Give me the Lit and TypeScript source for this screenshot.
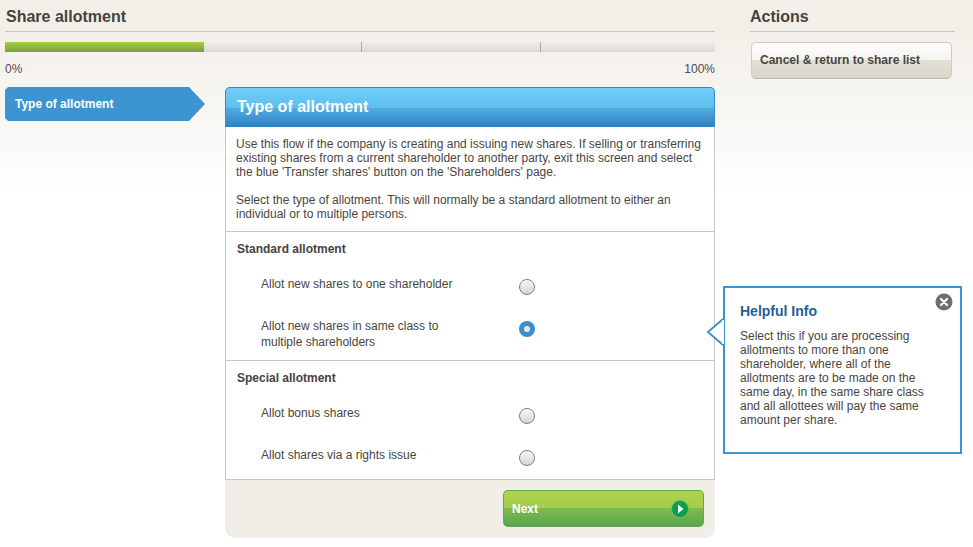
import { LitElement, html, css } from "lit";
import { customElement } from "lit/decorators.js";

@customElement("app-root")
export class AppRoot extends LitElement {
  static styles = css`
    :host {
      display: block;
      position: relative;
      width: 973px;
      height: 547px;
      overflow: hidden;
      font-family: "Liberation Sans", Arial, sans-serif;
      font-size: 12px;
      line-height: 14px;
      color: #4a4541;
      background: linear-gradient(#f2efe8 0, #f2efe8 30px, #ffffff 200px);
    }
    .page {
      display: grid;
      grid-template-columns: 710px 205px;
      column-gap: 35px;
      padding-left: 5px;
    }
    .title {
      margin: 0;
      height: 31px;
      border-bottom: 1px solid #c9c5bd;
      font-size: 16px;
      line-height: 33px;
      font-weight: bold;
      color: #47423e;
    }
    main .title { padding-left: 1px; }
    .progress {
      margin-top: 10px;
      height: 10px;
      display: grid;
      grid-template-columns: 199px 158px 179px 174px;
      background: linear-gradient(#efedea, #dcdad6);
    }
    .progress .fill {
      background: linear-gradient(#a5cf46, #7c9c3e);
    }
    .progress .seg { border-right: 1px solid #a9a7a3; }
    .progress .seg.last { border-right: 0; }
    .scale {
      display: flex;
      justify-content: space-between;
      margin-top: 10px;
      height: 14px;
      color: #4f4a58;
    }
    .flow {
      display: grid;
      grid-template-columns: 200px 490px;
      column-gap: 20px;
      margin-top: 11px;
    }
    .step {
      height: 34px;
      box-sizing: border-box;
      padding: 10px 0 0 10px;
      font-weight: bold;
      color: #fff;
      background: #3c94d1;
      clip-path: polygon(0 3px, 3px 0, 184px 0, 200px 17px, 184px 34px, 3px 34px, 0 31px);
    }
    .panel-head {
      margin: 0;
      height: 40px;
      box-sizing: border-box;
      padding-left: 11px;
      border: 1px solid #3a86c4;
      border-bottom: 0;
      border-radius: 5px 5px 0 0;
      font-size: 16px;
      line-height: 38px;
      font-weight: bold;
      color: #fff;
      background: linear-gradient(#6fcdf8 0, #5fbfee 50%, #52aee2 50%, #2f81c3 100%);
    }
    .panel-body {
      background: #fff;
      border: 1px solid #c8c8c8;
      border-top: 0;
    }
    .intro {
      padding: 10px;
      height: 104px;
      box-sizing: border-box;
    }
    .intro p { margin: 0 0 14px; }
    .section { border-top: 1px solid #c8c8c8; }
    .section h3 {
      margin: 0;
      padding: 10px 0 0 11px;
      height: 24px;
      font-size: 12px;
      line-height: 14px;
      font-weight: bold;
      color: #47423e;
    }
    .option {
      display: grid;
      grid-template-columns: 258px 16px;
      padding-left: 35px;
      line-height: 16px;
    }
    .option .radio { margin-top: 3px; }
    .s1 .o1 { padding-top: 10px; height: 32px; }
    .s1 .o2 { padding-top: 10px; height: 42px; }
    .s2 .o1 { padding-top: 10px; height: 32px; }
    .s2 .o2 { padding-top: 10px; height: 32px; }
    .radio {
      width: 16px;
      height: 16px;
      box-sizing: border-box;
      border-radius: 50%;
      border: 1px solid #7d7d7d;
      background: linear-gradient(#f6f6f6, #d6d6d6);
      box-shadow: inset 0 1px 1px #fff;
    }
    .radio.on {
      border: 0;
      background: #3a8fcf;
      display: grid;
      place-items: center;
      box-shadow: none;
    }
    .radio.on::after {
      content: "";
      width: 6px;
      height: 6px;
      border-radius: 50%;
      background: #e6e6e6;
    }
    .panel-foot {
      height: 58px;
      box-sizing: border-box;
      padding: 10px 11px 0 0;
      display: flex;
      justify-content: flex-end;
      background: #f1eee7;
      border-radius: 0 0 10px 10px;
    }
    .next {
      width: 201px;
      height: 37px;
      box-sizing: border-box;
      padding: 0 14px 0 8px;
      display: flex;
      align-items: center;
      justify-content: space-between;
      border: 1px solid #62a94c;
      border-bottom-color: #7d9472;
      border-radius: 5px;
      font: bold 12px "Liberation Sans", Arial, sans-serif;
      color: #fff;
      background: linear-gradient(#aed24e 0, #a2cd4a 50%, #80ba4a 50%, #56a74d 100%);
    }
    .next svg { display: block; }
    .cancel {
      margin-top: 10px;
      margin-left: 1px;
      width: 201px;
      height: 37px;
      box-sizing: border-box;
      display: block;
      padding: 0 0 2px 8px;
      text-align: left;
      border: 1px solid #cfcbc3;
      border-bottom-color: #b8b5ae;
      border-radius: 5px;
      font: bold 12px "Liberation Sans", Arial, sans-serif;
      color: #4a4541;
      background: linear-gradient(#fdfdfc 0, #f5f3ef 50%, #e2dfd5 50%, #dad6cb 100%);
    }
    .info {
      position: absolute;
      left: 723px;
      top: 286px;
      width: 239px;
      height: 168px;
      box-sizing: border-box;
      padding: 15px 16px 0 15px;
      background: #fff;
      border: 2px solid #3b93d0;
    }
    .info h4 {
      margin: 0 0 10px;
      font-size: 14px;
      line-height: 16px;
      font-weight: bold;
      color: #1f5d9e;
    }
    .info p { margin: 0; }
    .arrow {
      position: absolute;
      left: -19px;
      top: 29px;
      display: block;
    }
    .close {
      position: absolute;
      right: 7px;
      top: 5px;
      display: block;
    }
  `;

  render() {
    return html`
      <div class="page">
        <main>
          <h1 class="title">Share allotment</h1>
          <div class="progress">
            <div class="fill"></div>
            <div class="seg"></div>
            <div class="seg"></div>
            <div class="seg last"></div>
          </div>
          <div class="scale"><span>0%</span><span>100%</span></div>
          <div class="flow">
            <div class="step">Type of allotment</div>
            <section>
              <h2 class="panel-head">Type of allotment</h2>
              <div class="panel-body">
                <div class="intro">
                  <p>Use this flow if the company is creating and issuing new shares. If selling or transferring existing shares from a current shareholder to another party, exit this screen and select the blue 'Transfer shares' button on the 'Shareholders' page.</p>
                  <p>Select the type of allotment. This will normally be a standard allotment to either an individual or to multiple persons.</p>
                </div>
                <div class="section s1">
                  <h3>Standard allotment</h3>
                  <div class="option o1">
                    <span>Allot new shares to one shareholder</span>
                    <div class="radio"></div>
                  </div>
                  <div class="option o2">
                    <span>Allot new shares in same class to<br />multiple shareholders</span>
                    <div class="radio on"></div>
                  </div>
                </div>
                <div class="section s2">
                  <h3>Special allotment</h3>
                  <div class="option o1">
                    <span>Allot bonus shares</span>
                    <div class="radio"></div>
                  </div>
                  <div class="option o2">
                    <span>Allot shares via a rights issue</span>
                    <div class="radio"></div>
                  </div>
                </div>
              </div>
              <div class="panel-foot">
                <button class="next">
                  <span>Next</span>
                  <svg width="18" height="18" viewBox="0 0 18 18">
                    <circle cx="9" cy="9" r="8.5" fill="#0b9e4f" stroke="#7cc05a" stroke-width="0.8"></circle>
                    <path d="M7 4.5 L12.5 9 L7 13.5 Z" fill="#fff"></path>
                  </svg>
                </button>
              </div>
            </section>
          </div>
        </main>
        <aside>
          <h1 class="title">Actions</h1>
          <button class="cancel">Cancel &amp; return to share list</button>
        </aside>
      </div>
      <div class="info">
        <svg class="arrow" width="18" height="30" viewBox="0 0 18 30">
          <path d="M17 2 L2 15 L17 28" fill="#fff" stroke="#3b93d0" stroke-width="2"></path>
          <rect x="16" y="3" width="2" height="24" fill="#fff"></rect>
        </svg>
        <svg class="close" width="18" height="18" viewBox="0 0 18 18">
          <circle cx="9" cy="9" r="8.5" fill="#6e6e6e"></circle>
          <path d="M6 6 L12 12 M12 6 L6 12" stroke="#fff" stroke-width="2.4" stroke-linecap="round"></path>
        </svg>
        <h4>Helpful Info</h4>
        <p>Select this if you are processing allotments to more than one shareholder, where all of the allotments are to be made on the same day, in the same share class and all allottees will pay the same amount per share.</p>
      </div>
    `;
  }
}
